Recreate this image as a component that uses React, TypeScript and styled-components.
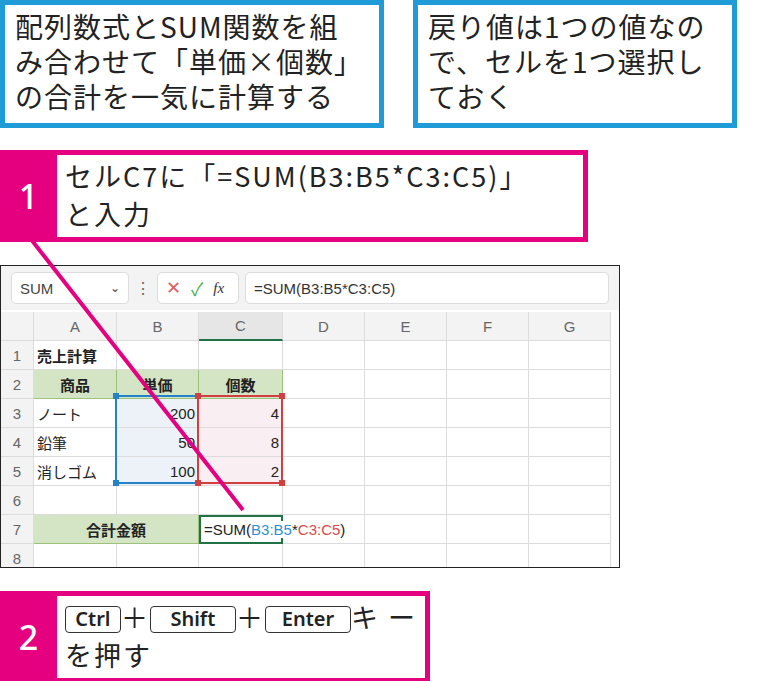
import styled, { createGlobalStyle } from 'styled-components';

const Global = createGlobalStyle`
  body { margin: 0; background: #fff; font-family: "Noto Sans CJK JP", "Noto Sans", sans-serif; }
`

const Page = styled.div`
  position: relative;
  width: 783px;
  height: 681px;
  overflow: hidden;
`

const TopRow = styled.div`
  display: flex;
  gap: 29px;
`

const Note = styled.div<{ $w: number }>`
  box-sizing: border-box;
  width: ${p => p.$w}px;
  height: 128px;
  border: 5px solid #1f9bd7;
  padding: 4px 10px;
  font-size: 28px;
  letter-spacing: 1px;
  line-height: 35px;
  color: #222;
  white-space: nowrap;
`

const Callout = styled.div<{ $w: number; $top: number }>`
  box-sizing: border-box;
  display: flex;
  width: ${p => p.$w}px;
  height: 92px;
  margin-top: ${p => p.$top}px;
  border: 5px solid #e4007f;
  border-left: none;
`

const Num = styled.div`
  width: 57px;
  background: #e4007f;
  color: #fff;
  font-family: "Noto Sans", sans-serif;
  font-size: 34px;
  font-weight: 500;
  display: flex;
  align-items: center;
  justify-content: center;
`

const CallText = styled.div`
  padding: 2px 8px;
  font-size: 27px;
  letter-spacing: 2px;
  line-height: 38px;
  color: #222;
  white-space: nowrap;
`

const Key = styled.span<{ $w: number }>`
  display: inline-block;
  box-sizing: border-box;
  width: ${p => p.$w}px;
  height: 27px;
  line-height: 24px;
  border: 1.5px solid #333;
  border-radius: 4px;
  text-align: center;
  font-family: "Noto Sans", sans-serif;
  font-size: 20px;
  font-weight: 600;
  letter-spacing: 0;
  vertical-align: 2px;
`

const Sheet = styled.div`
  box-sizing: border-box;
  width: 620px;
  height: 303px;
  margin-top: 23px;
  border: 1.5px solid #222;
  font-family: "Liberation Sans", "Noto Sans CJK JP", sans-serif;
  color: #333;
  overflow: hidden;
`

const FormulaBar = styled.div`
  display: flex;
  align-items: center;
  gap: 6px;
  padding: 5px 10px 5px 10px;
  background: #f3f3f3;
  height: 34px;
`

const Field = styled.div<{ $w?: number }>`
  height: 32px;
  ${p => p.$w ? `width: ${p.$w}px;` : 'flex: 1;'}
  background: #fff;
  border: 1px solid #ddd;
  border-radius: 5px;
  display: flex;
  align-items: center;
  padding: 0 8px;
  box-sizing: border-box;
  font-size: 15px;
  gap: 10px;
`

const Grid = styled.div`
  display: grid;
  grid-template-columns: 33px 83px 82px 84px 82px 82px 82px 82px;
  grid-auto-rows: 29px;
  font-size: 15px;
  margin-top: 2px;
`

const Cell = styled.div<{ $head?: boolean; $align?: string; $bg?: string; $bold?: boolean }>`
  box-sizing: border-box;
  border-right: 1px solid #dcdcdc;
  border-bottom: 1px solid #dcdcdc;
  background: ${p => p.$bg || (p.$head ? '#f3f3f3' : '#fff')};
  color: ${p => p.$head ? '#666' : '#222'};
  font-weight: ${p => p.$bold ? 700 : 400};
  display: flex;
  align-items: center;
  justify-content: ${p => p.$align || 'flex-start'};
  padding: 0 3px;
  white-space: nowrap;
  position: relative;
`

const green = '#d3e5c5'
const blue = '#edf2f9'
const pink = '#f9eef1'

const Overlay = styled.svg`
  position: absolute;
  left: 0;
  top: 0;
  pointer-events: none;
`

type C = { t?: string; a?: string; bg?: string; b?: boolean; span?: number }

const rows: C[][] = [
  [{ t: '売上計算', b: true }, {}, {}, {}, {}, {}, {}],
  [{ t: '商品', a: 'center', bg: green, b: true }, { t: '単価', a: 'center', bg: green, b: true }, { t: '個数', a: 'center', bg: green, b: true }, {}, {}, {}, {}],
  [{ t: 'ノート' }, { t: '200', a: 'flex-end', bg: blue }, { t: '4', a: 'flex-end', bg: pink }, {}, {}, {}, {}],
  [{ t: '鉛筆' }, { t: '50', a: 'flex-end', bg: blue }, { t: '8', a: 'flex-end', bg: pink }, {}, {}, {}, {}],
  [{ t: '消しゴム' }, { t: '100', a: 'flex-end', bg: blue }, { t: '2', a: 'flex-end', bg: pink }, {}, {}, {}, {}],
  [{}, {}, {}, {}, {}, {}, {}],
  [{ t: '合計金額', a: 'center', bg: green, b: true, span: 2 }, { t: 'f' }, {}, {}, {}, {}],
  [{}, {}, {}, {}, {}, {}, {}],
]

export default function App() {
  return (
    <Page>
      <Global />
      <TopRow>
        <Note $w={384}>配列数式とSUM関数を組<br />み合わせて「単価×個数」<br />の合計を一気に計算する</Note>
        <Note $w={324}>戻り値は1つの値なの<br />で、セルを1つ選択し<br />ておく</Note>
      </TopRow>
      <Callout $w={588} $top={22}>
        <Num>1</Num>
        <CallText>セルC7に「=SUM(B3:B5*C3:C5)」<br />と入力</CallText>
      </Callout>
      <Sheet>
        <FormulaBar>
          <Field $w={118} style={{ justifyContent: 'space-between', color: '#444' }}>SUM <span style={{ fontSize: 12 }}>⌄</span></Field>
          <span style={{ color: '#666' }}>⋮</span>
          <Field $w={82}>
            <span style={{ color: '#e06060', fontSize: 18 }}>✕</span>
            <span style={{ color: '#4caf50', fontSize: 18 }}>✓</span>
            <i style={{ fontFamily: 'Liberation Serif, serif', color: '#333' }}>fx</i>
          </Field>
          <Field>=SUM(B3:B5*C3:C5)</Field>
        </FormulaBar>
        <Grid>
          <Cell $head />
          {['A', 'B', 'C', 'D', 'E', 'F', 'G'].map(h => (
            <Cell key={h} $head $align="center" style={h === 'C' ? { borderBottom: '2px solid #217346', background: '#e6e6e6' } : undefined}>{h}</Cell>
          ))}
          {rows.map((r, i) => [
            <Cell key={'h' + i} $head $align="center">{i + 1}</Cell>,
            ...r.map((c, j) => (
              <Cell key={i + '-' + j} $align={c.a} $bg={c.bg} $bold={c.b}
                style={{
                  ...(c.span ? { gridColumn: 'span 2' } : {}),
                  ...(c.bg === green ? { borderColor: '#9cc27a' } : {}),
                  ...(c.t === 'f' ? { border: '2px solid #217346', overflow: 'visible', zIndex: 2 } : {}),
                }}>
                {c.t === 'f'
                  ? <span style={{ background: '#fff', paddingRight: 4 }}>=SUM(<span style={{ color: '#2f8fd0' }}>B3:B5</span>*<span style={{ color: '#d84a4a' }}>C3:C5</span>)</span>
                  : c.t}
              </Cell>
            )),
          ])}
        </Grid>
      </Sheet>
      <Callout $w={430} $top={23}>
        <Num>2</Num>
        <CallText>
          <Key $w={56}>Ctrl</Key>＋<Key $w={86}>Shift</Key>＋<Key $w={86}>Enter</Key>キ ー<br />を押す
        </CallText>
      </Callout>
      <Overlay width="783" height="681">
        <rect x="116" y="396" width="82" height="87" fill="none" stroke="#2383c8" strokeWidth="2" />
        <rect x="198" y="396" width="84" height="87" fill="none" stroke="#d04040" strokeWidth="2" />
        {[[116, 396], [198, 396], [116, 483], [198, 483]].map(([x, y]) => <rect key={'b' + x + y} x={x - 3} y={y - 3} width="6" height="6" fill="#2383c8" />)}
        {[[198, 396], [282, 396], [198, 483], [282, 483]].map(([x, y]) => <rect key={'r' + x + y} x={x - 3} y={y - 3} width="6" height="6" fill="#d04040" />)}
        <line x1="30" y1="238" x2="243" y2="510" stroke="#e4007f" strokeWidth="4" />
      </Overlay>
    </Page>
  )
}
